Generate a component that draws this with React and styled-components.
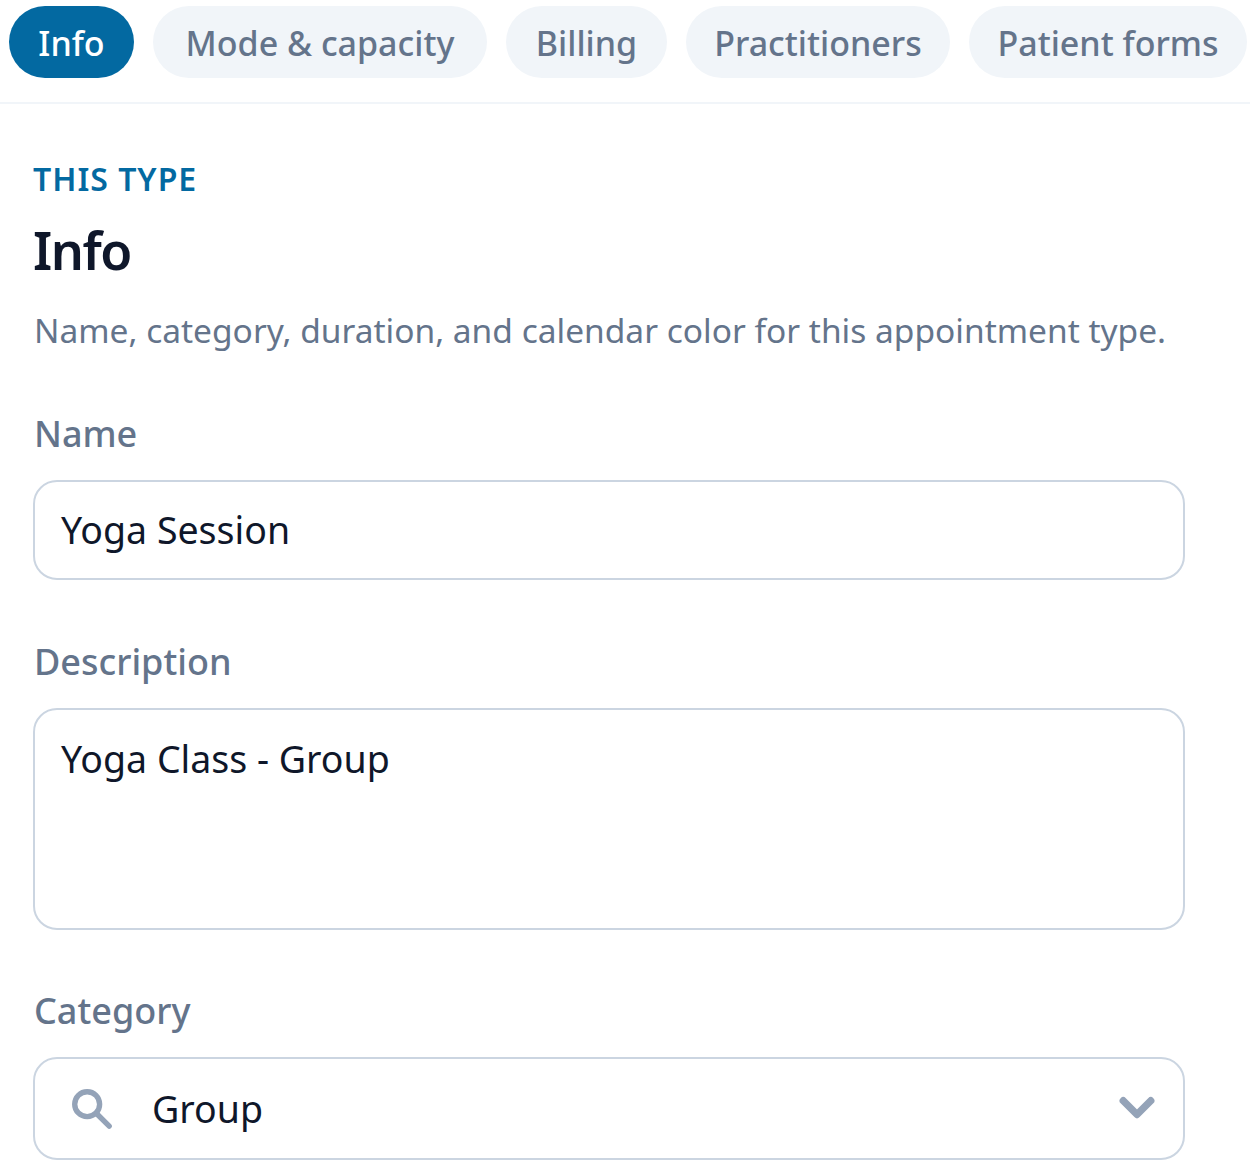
import React from "react";
import styled, { createGlobalStyle } from "styled-components";

const Global = createGlobalStyle`
  html, body {
    margin: 0;
    background: #fff;
    font-family: "Noto Sans", "Open Sans", sans-serif;
  }
`;

const Page = styled.div`
  width: 1250px;
  height: 1167px;
  overflow: hidden;
`;

const Tabs = styled.nav`
  display: flex;
  align-items: flex-start;
  gap: 19px;
  box-sizing: border-box;
  height: 104px;
  padding: 6px 0 0 9px;
  border-bottom: 2px solid #f1f5f9;
`;

const Tab = styled.button`
  flex: none;
  width: ${(p) => p.$w}px;
  height: 72px;
  padding: 0;
  border: 0;
  border-radius: 36px;
  font: 500 34px/74px "Noto Sans", sans-serif;
  background: ${(p) => (p.$active ? "#0369a1" : "#f1f5f9")};
  color: ${(p) => (p.$active ? "#fff" : "#64748b")};
`;

const Content = styled.main`
  width: 1152px;
  margin-left: 33px;
`;

const Eyebrow = styled.div`
  margin-top: 54px;
  font-size: 32px;
  line-height: 42px;
  font-weight: 600;
  letter-spacing: 1px;
  color: #0369a1;
`;

const Title = styled.h1`
  margin: 19px 0 0;
  font-size: 52px;
  line-height: 62px;
  font-weight: 600;
  letter-spacing: -1.5px;
  color: #0f172a;
`;

const Lead = styled.p`
  margin: 24px 0 0 1px;
  font-size: 33.5px;
  line-height: 50px;
  color: #64748b;
  white-space: nowrap;
`;

const Label = styled.label`
  display: block;
  margin: ${(p) => p.$top}px 0 0 1px;
  font-size: 36px;
  line-height: 49px;
  font-weight: 500;
  color: #64748b;
`;

const Field = styled.div`
  box-sizing: border-box;
  height: ${(p) => p.$h}px;
  margin-top: 22px;
  padding: 0 26px;
  display: flex;
  align-items: ${(p) => (p.$multi ? "flex-start" : "center")};
  border: 2.5px solid #cbd5e1;
  border-radius: 24px;
  font-size: 37.5px;
  line-height: 50px;
  color: #0f172a;
  ${(p) => p.$multi && "padding-top: 24px;"}
`;

const SearchIcon = styled.svg`
  width: 46px;
  height: 46px;
  margin: -2px 38px 0 7px;
  color: #94a3b8;
`;

const Chevron = styled.svg`
  width: 44px;
  height: 44px;
  margin: 0 -2px 0 auto;
  color: #94a3b8;
`;

export default function App() {
  return (
    <Page>
      <Global />
      <Tabs>
        <Tab $active $w={125}>Info</Tab>
        <Tab $w={334}>Mode &amp; capacity</Tab>
        <Tab $w={161}>Billing</Tab>
        <Tab $w={264}>Practitioners</Tab>
        <Tab $w={278}>Patient forms</Tab>
      </Tabs>
      <Content>
        <Eyebrow>THIS TYPE</Eyebrow>
        <Title>Info</Title>
        <Lead>Name, category, duration, and calendar color for this appointment type.</Lead>
        <Label $top={54}>Name</Label>
        <Field $h={100}>Yoga Session</Field>
        <Label $top={57}>Description</Label>
        <Field $h={222} $multi>Yoga Class - Group</Field>
        <Label $top={56}>Category</Label>
        <Field $h={103}>
          <SearchIcon viewBox="0 0 24 24" fill="none" stroke="currentColor" strokeWidth="2.8" strokeLinecap="round">
            <circle cx="10" cy="10" r="6.5" />
            <path d="M15 15l6.5 6.5" />
          </SearchIcon>
          Group
          <Chevron viewBox="0 0 24 24" fill="none" stroke="currentColor" strokeWidth="4" strokeLinecap="round" strokeLinejoin="round">
            <path d="M4.5 7.5L12 15l7.5-7.5" />
          </Chevron>
        </Field>
      </Content>
    </Page>
  );
}
